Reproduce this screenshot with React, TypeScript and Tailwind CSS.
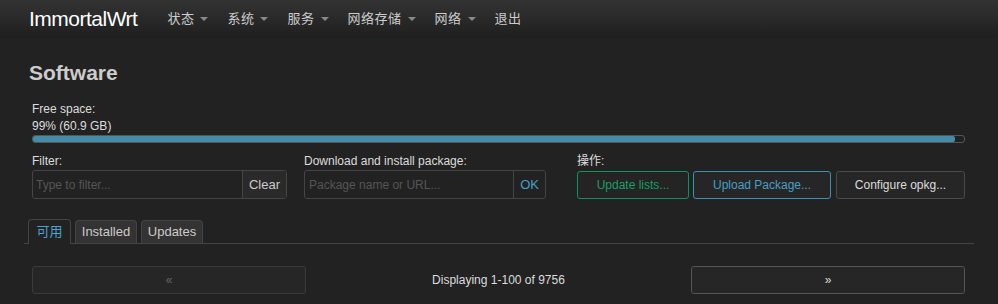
const menus = ["状态", "系统", "服务", "网络存储", "网络"];

function Caret() {
  return <span className="ml-[6px] inline-block h-0 w-0 border-x-[4px] border-t-[4px] border-x-transparent border-t-[#888] align-middle" />;
}

export default function App() {
  return (
    <div className="h-[304px] w-[998px] overflow-hidden bg-[#222] text-[#ccc]" style={{ fontFamily: '"Liberation Sans", "Noto Sans CJK SC", Arial, sans-serif' }}>
      {/* Top bar */}
      <header className="flex h-[38px] items-center bg-gradient-to-b from-[#333] to-[#1f1f1f] pl-[29px]">
        <span className="text-[21px] tracking-[-0.5px] text-white">ImmortalWrt</span>
        <nav className="ml-[30px] flex items-center gap-[19px] text-[13px] text-[#ccc]">
          {menus.map((m) => (
            <span key={m} className="flex items-center tracking-[0.5px]">
              {m}
              <Caret />
            </span>
          ))}
          <span className="tracking-[0.5px]">退出</span>
        </nav>
      </header>

      <main className="px-[32px]">
        <h2 className="-ml-[3px] mt-[22px] text-[21px] font-bold leading-[26px] text-[#ccc]">Software</h2>

        {/* Free space */}
        <div className="mt-[14px] text-[12px] leading-[18px] text-[#ddd]">
          <div>Free space:</div>
          <div className="leading-[17px]">99% (60.9 GB)</div>
          <div className="h-[8px] w-[933px] rounded-[3px] border border-[#555] bg-[#222]">
            <div className="h-full w-[99%] rounded-[2px] bg-[#458ca8]" />
          </div>
        </div>

        {/* Controls */}
        <div className="mt-[10px] flex items-start text-[12px] text-[#ddd]">
          <div className="w-[255px]">
            <div className="leading-[16px]">Filter:</div>
            <div className="mt-[1px] flex h-[29px] rounded-[3px] border border-[#444]">
              <input className="w-0 flex-1 bg-transparent px-[3px] text-[12px] text-[#ccc] outline-none placeholder:text-[#555]" placeholder="Type to filter..." />
              <button className="border-l border-[#444] bg-[#2a2a2a] px-[6px] text-[13px] text-[#ccc]">Clear</button>
            </div>
          </div>
          <div className="ml-[17px] w-[242px]">
            <div className="leading-[16px]">Download and install package:</div>
            <div className="mt-[1px] flex h-[29px] rounded-[3px] border border-[#444]">
              <input className="w-0 flex-1 bg-transparent px-[4px] text-[12px] text-[#ccc] outline-none placeholder:text-[#555]" placeholder="Package name or URL..." />
              <button className="border-l border-[#444] px-[6px] text-[13px] text-[#4a9ec6]">OK</button>
            </div>
          </div>
          <div className="ml-[31px]">
            <div className="leading-[16px]">操作:</div>
            <div className="mt-[2px] flex gap-[4px] text-[12px]">
              <button className="h-[28px] w-[112px] rounded-[3px] border border-[#10915e] bg-[#242424] text-[#1a9e67]">Update lists...</button>
              <button className="h-[28px] w-[138px] rounded-[3px] border border-[#3e8fb5] bg-[#262626] text-[#4a9ec6]">Upload Package...</button>
              <button className="ml-[1px] h-[28px] w-[129px] rounded-[3px] border border-[#4a4a4a] bg-[#262626] text-[#ddd]">Configure opkg...</button>
            </div>
          </div>
        </div>

        {/* Tabs */}
        <div className="-mx-[8px] mt-[20px] flex items-end gap-[4px] border-b border-[#444] pl-[4px] text-[13px]">
          <span className="-mb-px flex h-[25px] w-[43px] items-center justify-center rounded-t-[4px] border border-b-0 border-[#444] bg-[#222] text-[#4aa3d0]">可用</span>
          <span className="flex h-[23px] w-[62px] items-center justify-center rounded-t-[4px] border border-b-0 border-[#444] bg-[#333] text-[#ccc]">Installed</span>
          <span className="flex h-[23px] w-[62px] items-center justify-center rounded-t-[4px] border border-b-0 border-[#444] bg-[#333] text-[#ccc]">Updates</span>
        </div>

        {/* Pager */}
        <div className="mt-[22px] flex w-[933px] items-center text-[12px]">
          <button className="h-[28px] w-[274px] rounded-[3px] border border-[#3a3a3a] bg-[#262626] text-[#666]">«</button>
          <div className="flex-1 text-center text-[#ddd]">Displaying 1-100 of 9756</div>
          <button className="h-[28px] w-[274px] rounded-[3px] border border-[#555] bg-[#262626] text-[#ddd]">»</button>
        </div>
      </main>
    </div>
  );
}
